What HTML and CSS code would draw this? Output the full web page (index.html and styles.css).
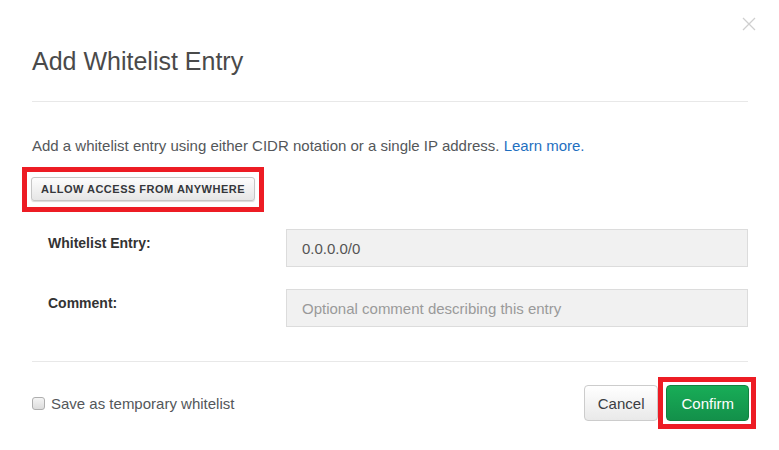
FILE: index.html
```html
<!DOCTYPE html>
<html lang="en">
<head>
    <meta charset="UTF-8">
    <meta name="viewport" content="width=device-width, initial-scale=1.0">
    <title>Add Whitelist Entry</title>
    <link rel="stylesheet" href="styles.css">
</head>
<body>
    <div class="modal">
        <button class="close" type="button" aria-label="Close">
            <svg width="14" height="14" viewBox="0 0 14 14">
                <path d="M1 1 L13 13 M13 1 L1 13" stroke="#cfcfcf" stroke-width="1.3" fill="none"/>
            </svg>
        </button>
        <div class="modal-header">
            <h3 class="modal-title">Add Whitelist Entry</h3>
        </div>
        <div class="modal-body">
            <p class="intro">Add a whitelist entry using either CIDR notation or a single IP address. <a href="#">Learn more.</a></p>
            <span class="callout callout-left">
                <button class="btn-small" type="button">ALLOW ACCESS FROM ANYWHERE</button>
            </span>
            <div class="form-row first">
                <label for="entry">Whitelist Entry:</label>
                <input type="text" id="entry" value="0.0.0.0/0">
            </div>
            <div class="form-row">
                <label for="comment">Comment:</label>
                <input type="text" id="comment" placeholder="Optional comment describing this entry">
            </div>
        </div>
        <div class="modal-footer">
            <label class="checkbox">
                <input type="checkbox">
                <span>Save as temporary whitelist</span>
            </label>
            <div class="actions">
                <button class="btn" type="button">Cancel</button>
                <span class="callout callout-right">
                    <button class="btn btn-primary" type="button">Confirm</button>
                </span>
            </div>
        </div>
    </div>
</body>
</html>
```

FILE: styles.css
```css
body {
    margin: 0;
    background-color: #fff;
    font-family: "Liberation Sans", Arial, sans-serif;
    color: #555;
}

.modal {
    position: relative;
    padding: 0 31px 0 32px;
}

.close {
    position: absolute;
    top: 17px;
    right: 23px;
    padding: 0;
    border: none;
    background: none;
    cursor: pointer;
}

.close svg {
    display: block;
}

.modal-header {
    padding: 46px 0 25px;
    border-bottom: 1px solid #e8e8e8;
}

.modal-title {
    margin: 0;
    font-size: 25px;
    line-height: 30px;
    font-weight: normal;
    color: #4a4a4a;
}

.modal-body {
    padding: 34px 0 34px;
    border-bottom: 1px solid #e8e8e8;
}

.intro {
    margin: 0;
    font-size: 15px;
    line-height: 20px;
    color: #54575a;
}

.intro a {
    color: #1f6fbf;
    text-decoration: none;
}

.callout {
    display: inline-block;
    border: 5px solid #ed1c24;
}

.callout-left {
    margin: 11px 0 0 -10px;
    padding: 5px 4px 6px;
}

.callout-right {
    margin-right: -8px;
    padding: 3px 2px 3px 3px;
}

.callout button {
    display: block;
}

.btn-small {
    height: 24px;
    padding: 0 9px;
    font-family: "Liberation Sans", Arial, sans-serif;
    font-size: 11px;
    font-weight: bold;
    letter-spacing: 0.5px;
    color: #35373b;
    background: linear-gradient(#fdfdfd, #e6e6e6);
    border: 1px solid #c6c6c6;
    border-radius: 3px;
    box-shadow: 0 1px 1px rgba(0, 0, 0, 0.15);
    cursor: pointer;
}

.form-row {
    display: grid;
    grid-template-columns: 254px 1fr;
    margin-top: 22px;
}

.form-row.first {
    margin-top: 17px;
}

.form-row label {
    padding: 4px 0 0 16px;
    font-size: 14px;
    line-height: 20px;
    font-weight: bold;
    color: #333;
}

.form-row input {
    height: 38px;
    box-sizing: border-box;
    padding: 0 15px;
    font-family: "Liberation Sans", Arial, sans-serif;
    font-size: 15px;
    color: #555;
    background-color: #f1f1f1;
    border: 1px solid #dcdcdc;
    border-radius: 0;
    outline: none;
}

.form-row input::placeholder {
    color: #9a9a9a;
}

.modal-footer {
    display: flex;
    justify-content: space-between;
    align-items: center;
    padding: 15px 0 20px;
}

.checkbox {
    display: flex;
    align-items: center;
    gap: 6px;
    font-size: 15px;
    color: #54575a;
}

.checkbox input {
    appearance: none;
    width: 13px;
    height: 13px;
    margin: 0;
    border: 1px solid #aeaeae;
    border-radius: 3px;
    background: linear-gradient(#f4f4f4, #dcdcdc);
}

.actions {
    display: flex;
    align-items: center;
    gap: 0;
}

.btn {
    height: 36px;
    padding: 0 13px;
    font-family: "Liberation Sans", Arial, sans-serif;
    font-size: 15px;
    color: #3a3d42;
    background: linear-gradient(#ffffff, #e9e9e9);
    border: 1px solid #cccccc;
    border-radius: 4px;
    cursor: pointer;
}

.btn-primary {
    padding: 0 14px;
    color: #fff;
    background: linear-gradient(#18ad57, #13904a);
    border-color: #11833f;
}
```
